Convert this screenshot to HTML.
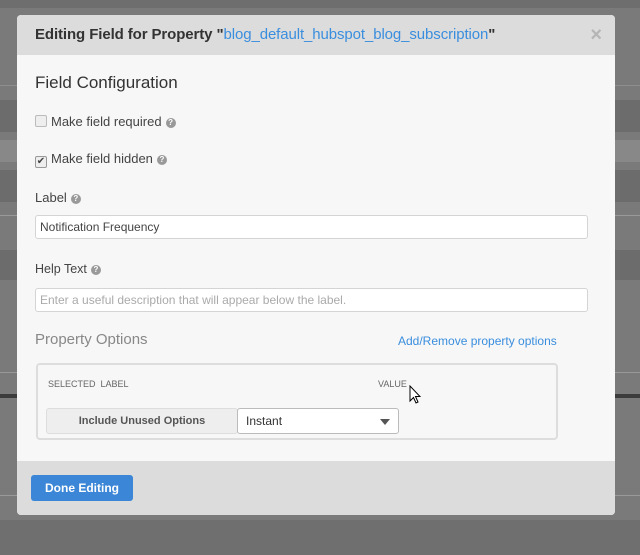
<!DOCTYPE html>
<html><head><style>
body{margin:0;width:640px;height:555px;overflow:hidden;background:#7a7a7a;font-family:"Liberation Sans",sans-serif;position:relative}
.bg div{position:absolute;left:0;width:640px}
.m{position:absolute;left:17px;top:15px;width:598px;height:500px;background:#f7f7f7;border-radius:4px;overflow:hidden}
.h{height:40px;background:#dcdcdc;font-weight:bold;font-size:15px;color:#333;line-height:40px;padding-left:18px;letter-spacing:-0.1px}
.h a{color:#3a8ede;font-weight:normal}
.x{position:absolute;right:13px;top:9px;color:#b5b5b5;font-size:20px;font-weight:bold}
.t{position:absolute;font-size:13px;color:#444}
.q{display:inline-block;width:10px;height:10px;border-radius:50%;background:#999;color:#fff;font-size:8px;text-align:center;line-height:10px;font-weight:bold;vertical-align:1px;margin-left:4px}
.in{position:absolute;left:18px;height:24px;border:1px solid #d4d4d4;border-radius:3px;background:#fff;font-size:12px;line-height:23px;padding-left:4px;box-sizing:border-box;width:553px}
.f{position:absolute;left:0;bottom:0;width:598px;height:54px;background:#dcdcdc}
.btn{position:absolute;left:14px;top:14px;width:102px;height:26px;background:#3b86d6;border-radius:3px;color:#fff;font-weight:bold;font-size:12px;text-align:center;line-height:26px}
</style></head><body>
<div class="bg">
<div style="top:0;height:8px;background:#6e6e6e"></div>
<div style="top:85px;height:1px;background:#8e8e8e"></div>
<div style="top:100px;height:32px;background:#6c6c6c"></div>
<div style="top:140px;height:22px;background:#888"></div>
<div style="top:170px;height:32px;background:#6c6c6c"></div>
<div style="top:215px;height:1px;background:#999"></div>
<div style="top:250px;height:30px;background:#6c6c6c"></div>
<div style="top:372px;height:1px;background:#999"></div>
<div style="top:394px;height:4px;background:#3c3c3c"></div>
<div style="top:495px;height:1px;background:#999"></div>
<div style="top:520px;height:35px;background:#6f6f6f"></div>
</div>
<div class="m">
<div class="h">Editing Field for Property "<a>blog_default_hubspot_blog_subscription</a>"</div>
<div class="x">×</div>
<div class="t" style="left:18px;top:58px;font-size:17px;color:#333">Field Configuration</div>
<div class="t" style="left:18px;top:99px"><span style="display:inline-block;width:10px;height:10px;border:1px solid #bbb;background:#eee;border-radius:2px;vertical-align:-1px;margin-right:4px"></span>Make field required<span class="q">?</span></div>
<div class="t" style="left:18px;top:136px"><span style="display:inline-block;width:10px;height:10px;border:1px solid #999;background:#eee;border-radius:2px;vertical-align:-1px;margin-right:4px;font-size:10px;line-height:10px;text-align:center">✔</span>Make field hidden<span class="q">?</span></div>
<div class="t" style="left:18px;top:175px">Label<span class="q">?</span></div>
<div class="in" style="top:200px;color:#444">Notification Frequency</div>
<div class="t" style="left:18px;top:247px;font-size:12.5px">Help Text<span class="q">?</span></div>
<div class="in" style="top:273px;color:#aaa">Enter a useful description that will appear below the label.</div>
<div class="t" style="left:18px;top:316px;font-size:15px;color:#888">Property Options</div>
<div class="t" style="left:381px;top:319px;font-size:12px;color:#3a8ede">Add/Remove property options</div>
<div style="position:absolute;left:19px;top:348px;width:522px;height:77px;border:2px solid #ddd;border-radius:4px;box-sizing:border-box;background:#f7f7f7">
<div class="t" style="left:10px;top:14px;font-size:9px;color:#666">SELECTED&nbsp; LABEL</div>
<div class="t" style="left:340px;top:14px;font-size:9px;color:#666">VALUE</div>
<div style="position:absolute;left:8px;top:43px;width:192px;height:26px;background:#eee;border:1px solid #ddd;border-radius:3px;box-sizing:border-box;text-align:center;line-height:24px;font-size:11px;font-weight:bold;color:#555">Include Unused Options</div>
<div style="position:absolute;left:199px;top:43px;width:162px;height:26px;background:#fff;border:1px solid #bbb;border-radius:3px;box-sizing:border-box;line-height:24px;font-size:12px;color:#333;padding-left:8px">Instant<span style="position:absolute;right:8px;top:10px;border:5px solid transparent;border-top:6px solid #555;border-bottom:0"></span></div>
</div>
<div class="f"><div class="btn">Done Editing</div></div>
</div>
<svg style="position:absolute;left:409px;top:385px" width="12" height="20"><path d="M1 1 L1 16 L4.5 12.5 L7 18 L9 17 L6.5 11.5 L11 11.5 Z" fill="#fff" stroke="#000" stroke-width="1"/></svg>
</body></html>
